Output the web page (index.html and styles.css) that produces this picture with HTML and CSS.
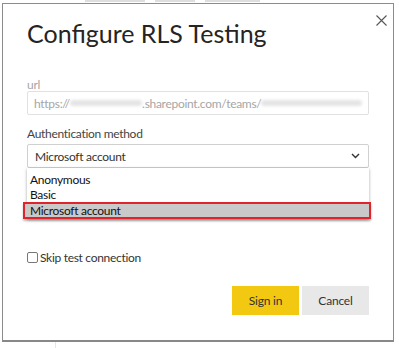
FILE: index.html
```html
<!DOCTYPE html>
<html lang="en">
<head>
  <meta charset="UTF-8" />
  <title>Configure RLS Testing</title>
  <link rel="stylesheet" href="styles.css">
</head>
<body>
  <div class="backdrop"><i class="mark m1"></i><i class="mark m2"></i><i class="mark m3"></i></div>

  <div class="dialog">
    <h2 class="title">Configure RLS Testing</h2>
    <button class="close" aria-label="Close">
      <svg width="11" height="11" viewBox="0 0 11 11"><path d="M0.5 0.5 L10.5 10.5 M10.5 0.5 L0.5 10.5" stroke="#555" stroke-width="1.1" fill="none"/></svg>
    </button>

    <label class="label light">url</label>
    <div class="input">https://<span class="blur w1"></span>.sharepoint.com/teams/<span class="blur w2"></span></div>

    <label class="label">Authentication method</label>
    <div class="select-wrap">
      <div class="select">
        <span>Microsoft account</span>
        <svg width="9" height="6" viewBox="0 0 9 6"><path d="M1 1 L4.5 4.5 L8 1" stroke="#333" stroke-width="1.4" fill="none"/></svg>
      </div>
      <ul class="options">
        <li>Anonymous</li>
        <li>Basic</li>
        <li class="picked">Microsoft account</li>
      </ul>
    </div>

    <label class="check"><span class="box"></span>Skip test connection</label>

    <div class="actions">
      <button class="btn primary">Sign in</button>
      <button class="btn">Cancel</button>
    </div>
  </div>
  <div class="tail"></div>
</body>
</html>
```

FILE: styles.css
```css
* {
  box-sizing: border-box;
  font-family: 'Lato', sans-serif;
}

body {
  margin: 0;
  background: #fff;
  width: 399px;
  height: 348px;
  overflow: hidden;
}

.backdrop {
  height: 3px;
  display: flex;
  gap: 10px;
  padding-left: 85px;
  overflow: hidden;
}

.mark {
  display: block;
  height: 2px;
  background: #dedede;
}

.m1 { width: 60px; }
.m2 { width: 40px; }
.m3 { width: 55px; }

.dialog {
  position: relative;
  margin-left: 2px;
  width: 392px;
  height: 339px;
  border: 1px solid #8c8c8c;
  border-bottom: 2px solid #888;
  padding: 13px 24px 0 24px;
}

.title {
  margin: 0;
  font-size: 25px;
  font-weight: 400;
  line-height: 32px;
  color: #252423;
}

.close {
  position: absolute;
  top: 11px;
  right: 6px;
  border: none;
  background: none;
  padding: 0;
  line-height: 0;
}

.label {
  display: block;
  font-size: 12px;
  letter-spacing: -0.3px;
  line-height: 16px;
  color: #444;
  margin-top: 11px;
}

.label.light {
  color: #a6a6a6;
  margin-top: 28px;
}

.input {
  margin-top: -2px;
  height: 24px;
  border: 1px solid #e1e1e1;
  border-radius: 2px;
  padding: 0 6px;
  font-size: 12px;
  letter-spacing: -0.3px;
  color: #a6a6a6;
  white-space: nowrap;
  overflow: hidden;
  display: flex;
  align-items: center;
}

.blur {
  display: inline-block;
  height: 6px;
  background: #e4e4e4;
  border-radius: 3px;
  filter: blur(1.5px);
}

.w1 { width: 79px; }
.w2 { width: 110px; }

.select-wrap {
  position: relative;
  margin-top: 2px;
  margin-bottom: 82px;
}

.select {
  height: 24px;
  border: 1px solid #d0d0d0;
  border-radius: 2px;
  padding: 0 8px 0 7px;
  display: flex;
  align-items: center;
  justify-content: space-between;
  font-size: 12px;
  letter-spacing: -0.3px;
  color: #333;
}

.options {
  position: absolute;
  left: 0;
  right: 0;
  top: 24px;
  margin: 0;
  padding: 4px 0 0 0;
  list-style: none;
  background: #fff;
  box-shadow: 0 1px 3px rgba(0, 0, 0, 0.35);
}

.options li {
  font-size: 12px;
  letter-spacing: -0.3px;
  line-height: 15px;
  padding-left: 3px;
  color: #111;
}

.options li.picked {
  background: #c9c9c9;
  border: 2px solid #e0242b;
  margin: 0 -2px 0 -4px;
  padding-left: 5px;
  height: 17px;
  line-height: 13px;
  box-shadow: 0 2px 2px rgba(0, 0, 0, 0.25);
}

.check {
  display: flex;
  align-items: center;
  font-size: 12px;
  letter-spacing: -0.3px;
  color: #333;
}

.box {
  width: 11px;
  height: 11px;
  border: 1px solid #777;
  border-radius: 2px;
  margin-right: 2px;
}

.actions {
  display: flex;
  justify-content: flex-end;
  gap: 3px;
  margin-top: 21px;
}

.btn {
  width: 67px;
  height: 29px;
  border: none;
  background: #e8e8e8;
  font-size: 12px;
  letter-spacing: -0.2px;
  color: #333;
}

.btn.primary {
  background: #f2c811;
}

.tail {
  margin-left: 55px;
  width: 1px;
  height: 6px;
  background: #e6e6e6;
}
```
